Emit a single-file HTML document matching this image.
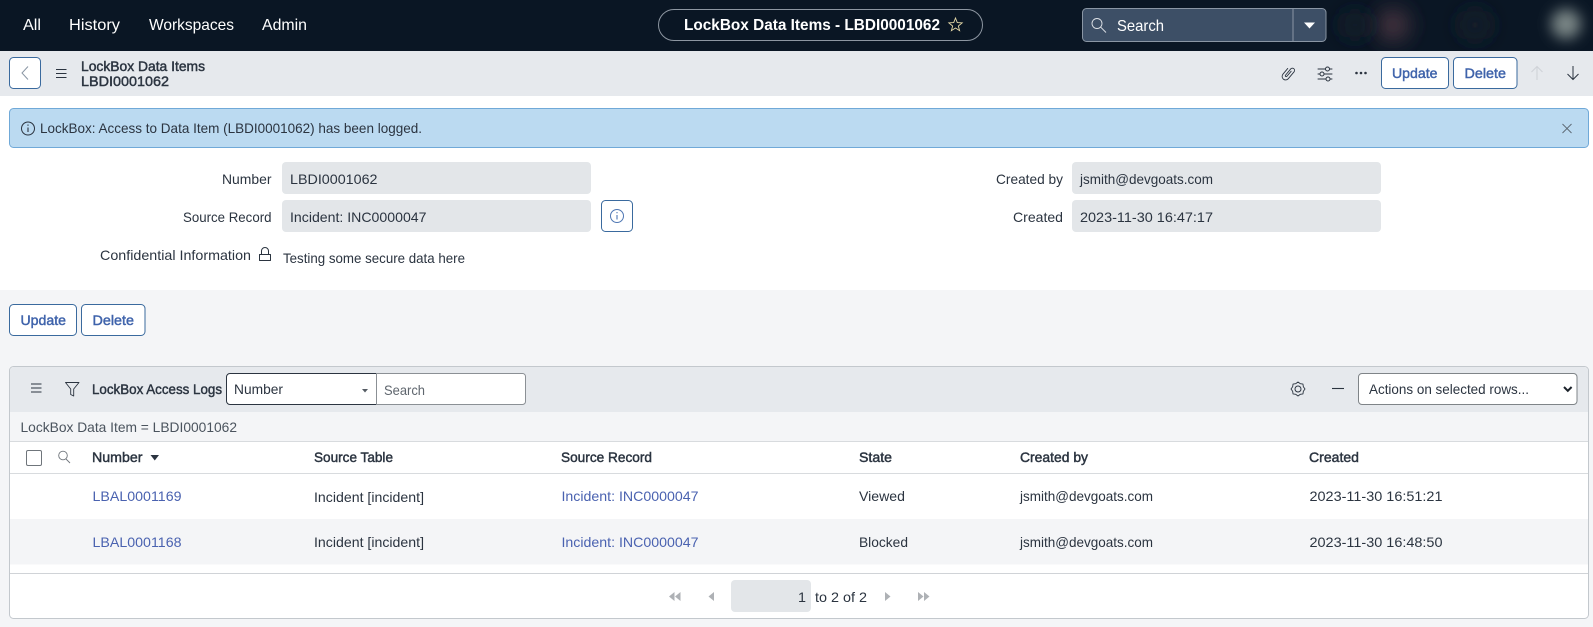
<!DOCTYPE html>
<html lang="en">
<head>
<meta charset="utf-8">
<title>LockBox Data Items - LBDI0001062</title>
<style>
html,body{margin:0;padding:0;width:1593px;height:627px;overflow:hidden;background:#f4f5f7}
svg{display:block}
text{font-family:"Liberation Sans",sans-serif;font-size:14px;fill:#2b3440}
.nav{font-size:16px;fill:#fff}
.m{stroke:#2b3440;stroke-width:.45}
.btn{fill:#3f63ab;stroke:#3f63ab;stroke-width:.45}
.link{fill:#4a62b0}
.ic{fill:none;stroke:#2b3440;stroke-width:1;stroke-linecap:round;stroke-linejoin:round}
.bx{fill:#fff;stroke:#3a6a9e;stroke-width:1}
.fld{fill:#e3e6e9}
.pg{fill:#aeb1b5}
</style>
</head>
<body>
<svg xmlns="http://www.w3.org/2000/svg" width="1593" height="627" viewBox="0 0 1593 627">
<defs>
<filter id="b1" x="-100%" y="-100%" width="300%" height="300%"><feGaussianBlur stdDeviation="10"/></filter>
<filter id="b2" x="-100%" y="-100%" width="300%" height="300%"><feGaussianBlur stdDeviation="7"/></filter>
<clipPath id="hc"><rect width="1593" height="51"/></clipPath>
</defs>
<rect width="1593" height="627" fill="#f4f5f7"/>

<!-- top header -->
<rect width="1593" height="51" fill="#0a1624"/>
<text class="nav" x="23" y="30" textLength="18" lengthAdjust="spacingAndGlyphs">All</text>
<text class="nav" x="69" y="30" textLength="51" lengthAdjust="spacingAndGlyphs">History</text>
<text class="nav" x="149" y="30" textLength="85" lengthAdjust="spacingAndGlyphs">Workspaces</text>
<text class="nav" x="262" y="30" textLength="45" lengthAdjust="spacingAndGlyphs">Admin</text>

<rect x="658.500" y="9.500" width="324" height="31" rx="15.500" fill="none" stroke="#8d96a1" stroke-width="1"/>
<text x="684" y="30" textLength="256" lengthAdjust="spacingAndGlyphs" style="font-size:16px;fill:#fff;font-weight:bold">LockBox Data Items - LBDI0001062</text>
<polygon points="955.500,18 957.260,22.570 962.160,22.840 958.350,26 959.600,30.660 955.500,28 951.400,30.660 952.650,26 948.840,22.840 953.740,22.570" fill="none" stroke="#e6d9a8" stroke-width=".9"/>

<rect x="1082.500" y="8.500" width="243.500" height="33" rx="4" fill="#3d4f66" stroke="#8a96a4" stroke-width="1"/>
<path d="M1293 9v32" stroke="#8a96a4" stroke-width="1"/>
<circle cx="1097" cy="23.500" r="5" fill="none" stroke="#dfe3e8" stroke-width=".9"/>
<path d="M1100.600 27.100l5.400 5.400" stroke="#dfe3e8" stroke-width=".9"/>
<text x="1117" y="31" textLength="47" lengthAdjust="spacingAndGlyphs" style="font-size:16px;fill:#fff">Search</text>
<path d="M1304 22.500h11l-5.500 6z" fill="#fff"/>

<g clip-path="url(#hc)">
<circle cx="1393" cy="25" r="17" fill="#43303c" filter="url(#b1)"/>
<circle cx="1355" cy="25" r="13" fill="#122029" filter="url(#b1)"/>
<circle cx="1475" cy="25" r="15" fill="#15232b" filter="url(#b1)"/>
<circle cx="1566" cy="24" r="15" fill="#7a8686" filter="url(#b2)"/>
</g>

<!-- form sub-header -->
<rect y="51" width="1593" height="45" fill="#e6e9ed"/>
<rect class="bx" x="9.500" y="57.500" width="31" height="31" rx="4"/>
<path d="M28 66.500l-6 6.500 6 6.500" fill="none" stroke="#8a96a4" stroke-width="1"/>
<path d="M56 69.500h10.500M56 73.500h10.500M56 77.500h10.500" stroke="#2b3440" stroke-width="1.100"/>
<text class="m" x="81" y="71" textLength="124" lengthAdjust="spacingAndGlyphs">LockBox Data Items</text>
<text class="m" x="81" y="86" textLength="88" lengthAdjust="spacingAndGlyphs">LBDI0001062</text>

<path class="ic" transform="translate(1288.500 73) rotate(40)" d="M-3.500-3v7.500a3.500 3.500 0 0 0 7 0v-9a2.200 2.200 0 0 0-4.400 0v8a.9.900 0 0 0 1.800 0V-3" style="stroke-width:.9"/>
<path class="ic" d="M1318 69h14M1318 74h14M1318 79h14"/>
<circle cx="1327.500" cy="69" r="2" fill="#e6e9ed" stroke="#2b3440"/>
<circle cx="1322" cy="74" r="2" fill="#e6e9ed" stroke="#2b3440"/>
<circle cx="1328" cy="79" r="2" fill="#e6e9ed" stroke="#2b3440"/>
<circle cx="1356.500" cy="73" r="1.300" fill="#2b3440"/><circle cx="1361" cy="73" r="1.300" fill="#2b3440"/><circle cx="1365.500" cy="73" r="1.300" fill="#2b3440"/>

<rect class="bx" x="1381.500" y="57.500" width="67" height="31" rx="4"/>
<text class="btn" x="1392" y="78" textLength="45.500" lengthAdjust="spacingAndGlyphs">Update</text>
<rect class="bx" x="1453.500" y="57.500" width="63.500" height="31" rx="4"/>
<text class="btn" x="1464.500" y="78" textLength="41.500" lengthAdjust="spacingAndGlyphs">Delete</text>
<path d="M1537 66.500v13.500M1531.500 72l5.500-5.500 5.500 5.500" fill="none" stroke="#cfd3d8" stroke-width="1.100"/>
<path d="M1573 66v13.500M1567.500 74l5.500 5.500 5.500-5.500" fill="none" stroke="#2b3440" stroke-width="1"/>

<!-- white form area -->
<rect y="96" width="1593" height="194" fill="#fff"/>
<rect x="9.500" y="108.500" width="1579" height="39" rx="4" fill="#bbdaf1" stroke="#70a9d8" stroke-width="1"/>
<circle cx="28" cy="128.500" r="6.500" fill="none" stroke="#2b3440" stroke-width="1"/>
<path d="M28 127.500v4.500M28 124.500v1.300" stroke="#2b3440" stroke-width="1.100"/>
<text x="40" y="133" textLength="382" lengthAdjust="spacingAndGlyphs">LockBox: Access to Data Item (LBDI0001062) has been logged.</text>
<path d="M1562.500 124l9 9M1571.500 124l-9 9" stroke="#5a6570" stroke-width=".9"/>

<text x="222" y="184" textLength="49.500" lengthAdjust="spacingAndGlyphs">Number</text>
<rect class="fld" x="282" y="162" width="309" height="32" rx="4"/>
<text x="290" y="184" textLength="87.500" lengthAdjust="spacingAndGlyphs">LBDI0001062</text>
<text x="183" y="222" textLength="88.500" lengthAdjust="spacingAndGlyphs">Source Record</text>
<rect class="fld" x="282" y="200" width="309" height="32" rx="4"/>
<text x="290" y="222" textLength="136.500" lengthAdjust="spacingAndGlyphs">Incident: INC0000047</text>
<rect class="bx" x="601.500" y="200.500" width="31" height="31" rx="4"/>
<circle cx="617" cy="216" r="6.500" fill="none" stroke="#4f77b3" stroke-width="1"/>
<path d="M617 215v4.500M617 212v1.300" stroke="#4f77b3" stroke-width="1.100"/>
<text x="100" y="260" textLength="151" lengthAdjust="spacingAndGlyphs">Confidential Information</text>
<path class="ic" d="M259.500 260.500h11v-6h-11zM261.500 254.500v-3.500a3.500 3.500 0 0 1 7 0v3.500"/>
<text x="283" y="263" textLength="182" lengthAdjust="spacingAndGlyphs">Testing some secure data here</text>

<text x="996" y="184" textLength="67" lengthAdjust="spacingAndGlyphs">Created by</text>
<rect class="fld" x="1072" y="162" width="309" height="32" rx="4"/>
<text x="1080" y="184" textLength="133" lengthAdjust="spacingAndGlyphs">jsmith@devgoats.com</text>
<text x="1013" y="222" textLength="50" lengthAdjust="spacingAndGlyphs">Created</text>
<rect class="fld" x="1072" y="200" width="309" height="32" rx="4"/>
<text x="1080" y="222" textLength="133" lengthAdjust="spacingAndGlyphs">2023-11-30 16:47:17</text>

<!-- bottom buttons -->
<rect class="bx" x="9.500" y="304.500" width="67" height="31" rx="4"/>
<text class="btn" x="20.500" y="325" textLength="45.500" lengthAdjust="spacingAndGlyphs">Update</text>
<rect class="bx" x="81.500" y="304.500" width="63.500" height="31" rx="4"/>
<text class="btn" x="92.500" y="325" textLength="41.500" lengthAdjust="spacingAndGlyphs">Delete</text>

<!-- related list panel -->
<rect x="9.500" y="366.500" width="1579" height="252" rx="4" fill="#fff" stroke="#c3c8cd" stroke-width="1"/>
<path d="M10 412v-41a4 4 0 0 1 4-4h1570a4 4 0 0 1 4 4v41z" fill="#e6e9ed"/>
<rect x="10" y="412" width="1578" height="30" fill="#f4f5f7"/>
<path d="M10 441.500h1578" stroke="#d8dbde" stroke-width="1"/>
<path d="M10 473.500h1578" stroke="#d8dbde" stroke-width="1"/>
<rect x="10" y="519" width="1578" height="45.500" fill="#f4f5f7"/>
<path d="M10 573.500h1578" stroke="#d0d3d7" stroke-width="1"/>

<path d="M31 384h10.500M31 388h10.500M31 392h10.500" stroke="#2b3440" stroke-width="1.100"/>
<path class="ic" d="M65.500 382.500h13.500l-5.300 6.500v7l-3-1.500v-5.500z" style="stroke-width:.9"/>
<text class="m" x="92" y="394" textLength="130" lengthAdjust="spacingAndGlyphs">LockBox Access Logs</text>

<path d="M230 373.500h146.500v31h-146.500a3.500 3.500 0 0 1-3.500-3.500v-24a3.500 3.500 0 0 1 3.500-3.500z" fill="#fff" stroke="#2b3440" stroke-width="1"/>
<path d="M376.500 373.500h146a3 3 0 0 1 3 3v25a3 3 0 0 1-3 3h-146z" fill="#fff" stroke="#8b9095" stroke-width="1"/>
<text x="234" y="394" textLength="49" lengthAdjust="spacingAndGlyphs">Number</text>
<path d="M362 389h6l-3 3.500z" fill="#555c64"/>
<text x="384" y="395" textLength="41" lengthAdjust="spacingAndGlyphs" style="fill:#5f666e">Search</text>

<g transform="translate(1298 389)">
<circle r="3" fill="none" stroke="#2b3440" stroke-width="1"/>
<polygon class="ic" style="stroke-width:.9" points="7,0 5.360,2.220 4.950,4.950 2.220,5.360 0,7 -2.220,5.360 -4.950,4.950 -5.360,2.220 -7,0 -5.360,-2.220 -4.950,-4.950 -2.220,-5.360 0,-7 2.220,-5.360 4.950,-4.950 5.360,-2.220"/>
</g>
<path d="M1332 388.500h12" stroke="#2b3440" stroke-width="1.100"/>
<rect x="1358.500" y="373.500" width="218.500" height="31" rx="3.500" fill="#fff" stroke="#7f8488" stroke-width="1"/>
<text x="1369" y="394" textLength="160" lengthAdjust="spacingAndGlyphs">Actions on selected rows...</text>
<path d="M1564 387l3.800 3.800 3.800-3.800" fill="none" stroke="#1c232b" stroke-width="2"/>

<text x="20.500" y="432" textLength="216.500" lengthAdjust="spacingAndGlyphs" style="fill:#4b545e">LockBox Data Item = LBDI0001062</text>

<rect x="26.500" y="450.500" width="15" height="15" rx="1.500" fill="#fff" stroke="#6f757b" stroke-width="1"/>
<circle cx="63" cy="455.500" r="4.300" fill="none" stroke="#6f757b" stroke-width=".9"/>
<path d="M66 459l4 4" stroke="#6f757b" stroke-width=".9"/>
<text class="m" x="92" y="462" textLength="50.500" lengthAdjust="spacingAndGlyphs">Number</text>
<path d="M150.500 455h8.500l-4.250 5.500z" fill="#2b3440"/>
<text class="m" x="314" y="462" textLength="79" lengthAdjust="spacingAndGlyphs">Source Table</text>
<text class="m" x="561" y="462" textLength="91" lengthAdjust="spacingAndGlyphs">Source Record</text>
<text class="m" x="859" y="462" textLength="33" lengthAdjust="spacingAndGlyphs">State</text>
<text class="m" x="1020" y="462" textLength="68" lengthAdjust="spacingAndGlyphs">Created by</text>
<text class="m" x="1309" y="462" textLength="50" lengthAdjust="spacingAndGlyphs">Created</text>

<text class="link" x="92.500" y="501" textLength="89" lengthAdjust="spacingAndGlyphs">LBAL0001169</text>
<text x="314" y="502" textLength="110" lengthAdjust="spacingAndGlyphs">Incident [incident]</text>
<text class="link" x="561.500" y="501" textLength="137" lengthAdjust="spacingAndGlyphs">Incident: INC0000047</text>
<text x="859" y="501" textLength="46" lengthAdjust="spacingAndGlyphs">Viewed</text>
<text x="1020" y="501" textLength="133" lengthAdjust="spacingAndGlyphs">jsmith@devgoats.com</text>
<text x="1309.500" y="501" textLength="133" lengthAdjust="spacingAndGlyphs">2023-11-30 16:51:21</text>

<text class="link" x="92.500" y="547" textLength="89" lengthAdjust="spacingAndGlyphs">LBAL0001168</text>
<text x="314" y="547" textLength="110" lengthAdjust="spacingAndGlyphs">Incident [incident]</text>
<text class="link" x="561.500" y="547" textLength="137" lengthAdjust="spacingAndGlyphs">Incident: INC0000047</text>
<text x="859" y="547" textLength="49" lengthAdjust="spacingAndGlyphs">Blocked</text>
<text x="1020" y="547" textLength="133" lengthAdjust="spacingAndGlyphs">jsmith@devgoats.com</text>
<text x="1309.500" y="547" textLength="133" lengthAdjust="spacingAndGlyphs">2023-11-30 16:48:50</text>

<!-- pagination -->
<path class="pg" d="M674.500 592v9l-5.500-4.500zM680.500 592v9l-5.500-4.500z"/>
<path class="pg" d="M714 592v9l-5.500-4.500z"/>
<rect class="fld" x="731" y="580" width="80" height="32" rx="4"/>
<text x="798" y="602" textLength="8" lengthAdjust="spacingAndGlyphs">1</text>
<text x="815" y="602" textLength="52" lengthAdjust="spacingAndGlyphs">to 2 of 2</text>
<path class="pg" d="M885 592v9l5.500-4.500z"/>
<path class="pg" d="M918 592v9l5.500-4.500zM924 592v9l5.500-4.500z"/>
</svg>
</body>
</html>
